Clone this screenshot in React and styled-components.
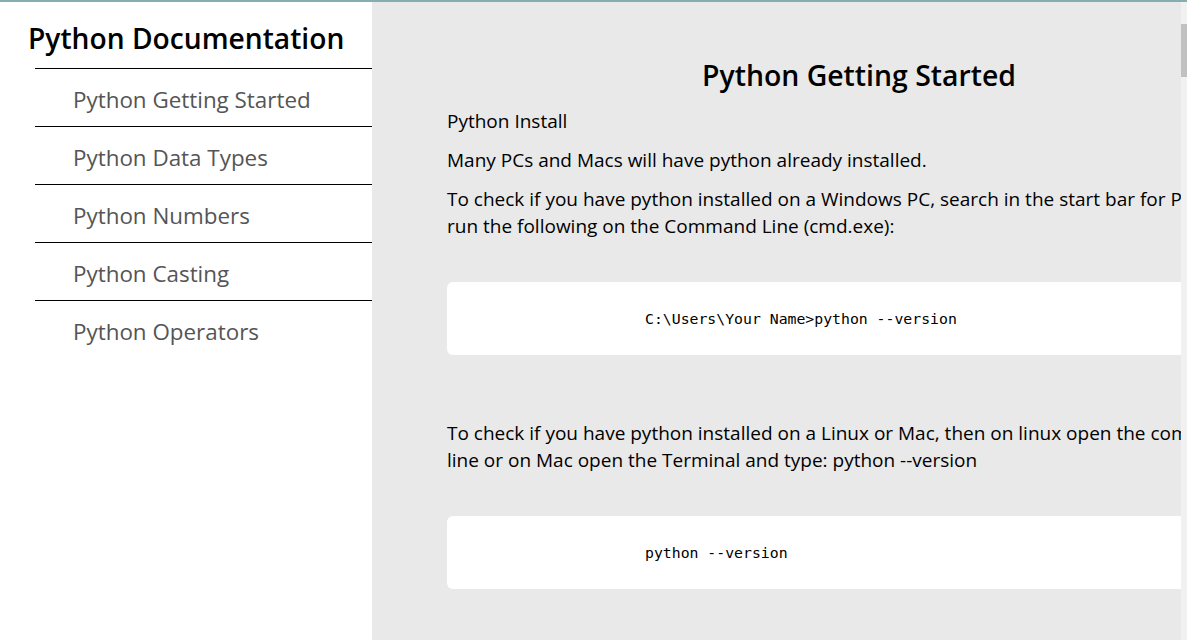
import React from "react";
import styled, { createGlobalStyle } from "styled-components";

const GlobalStyle = createGlobalStyle`
  html, body {
    margin: 0;
    padding: 0;
    overflow: hidden;
  }

  body {
    font-family: "Open Sans", "Noto Sans", sans-serif;
    background-color: #e9e9e9;
  }
`;

const Layout = styled.div`
  display: grid;
  grid-template-columns: 372px 1fr;
  border-top: 2px solid #86aeb1;
  height: calc(100vh - 2px);
`;

const Sidebar = styled.aside`
  background-color: #ffffff;
  display: flex;
  flex-direction: column;
`;

const SidebarTitle = styled.h2`
  margin: 0;
  padding: 16px 0 0 28px;
  height: 50px;
  font-size: 28.2px;
  line-height: 40px;
  font-weight: 600;
  color: #000000;
  white-space: nowrap;
`;

const NavList = styled.ul`
  list-style: none;
  margin: 0 0 0 35px;
  padding: 0;
`;

const NavItem = styled.li`
  border-top: 1px solid #000000;
  height: 57px;
  box-sizing: border-box;
  height: 58px;
  display: flex;
  align-items: center;
  padding: 3px 0 0 38px;
  font-size: 22.4px;
  color: #555555;
  cursor: pointer;
`;

const Main = styled.main`
  overflow: hidden;
  padding: 52px 0 0 75px;
`;

const Content = styled.section`
  width: 824px;
  color: #000000;
`;

const Heading = styled.h1`
  margin: 0 0 12px;
  text-align: center;
  font-size: 28.4px;
  line-height: 42px;
  font-weight: 600;
`;

const Paragraph = styled.p`
  margin: 0 0 12px;
  font-size: 19px;
  line-height: 27px;
`;

const CodeBox = styled.pre`
  margin: 42px 0 65px;
  padding: 0 0 0 198px;
  height: 73px;
  display: flex;
  align-items: center;
  background-color: #ffffff;
  border-radius: 6px;
  font-family: "DejaVu Sans Mono", "Liberation Mono", monospace;
  font-size: 14.8px;
  color: #000000;
`;

/* stand-in for the browser's vertical scrollbar, drawn over the page edge */
const ScrollTrack = styled.div`
  position: fixed;
  top: 2px;
  right: 0;
  bottom: 0;
  width: 6px;
  background-color: #f1f1f1;
`;

const ScrollThumb = styled.div`
  margin-top: 22px;
  height: 53px;
  background-color: #c1c1c1;
`;

const topics = [
  "Python Getting Started",
  "Python Data Types",
  "Python Numbers",
  "Python Casting",
  "Python Operators",
];

export default function App() {
  return (
    <>
      <GlobalStyle />
      <Layout>
        <Sidebar>
          <SidebarTitle>Python Documentation</SidebarTitle>
          <NavList>
            {topics.map((t) => (
              <NavItem key={t}>{t}</NavItem>
            ))}
          </NavList>
        </Sidebar>
        <Main>
          <Content>
            <Heading>Python Getting Started</Heading>
            <Paragraph>Python Install</Paragraph>
            <Paragraph>Many PCs and Macs will have python already installed.</Paragraph>
            <Paragraph>
              To check if you have python installed on a Windows PC, search in the start bar for
              Python or run the following on the Command Line (cmd.exe):
            </Paragraph>
            <CodeBox>C:\Users\Your Name&gt;python --version</CodeBox>
            <Paragraph>
              To check if you have python installed on a Linux or Mac, then on linux open the
              command line or on Mac open the Terminal and type: python --version
            </Paragraph>
            <CodeBox>python --version</CodeBox>
          </Content>
        </Main>
      </Layout>
      <ScrollTrack>
        <ScrollThumb />
      </ScrollTrack>
    </>
  );
}
